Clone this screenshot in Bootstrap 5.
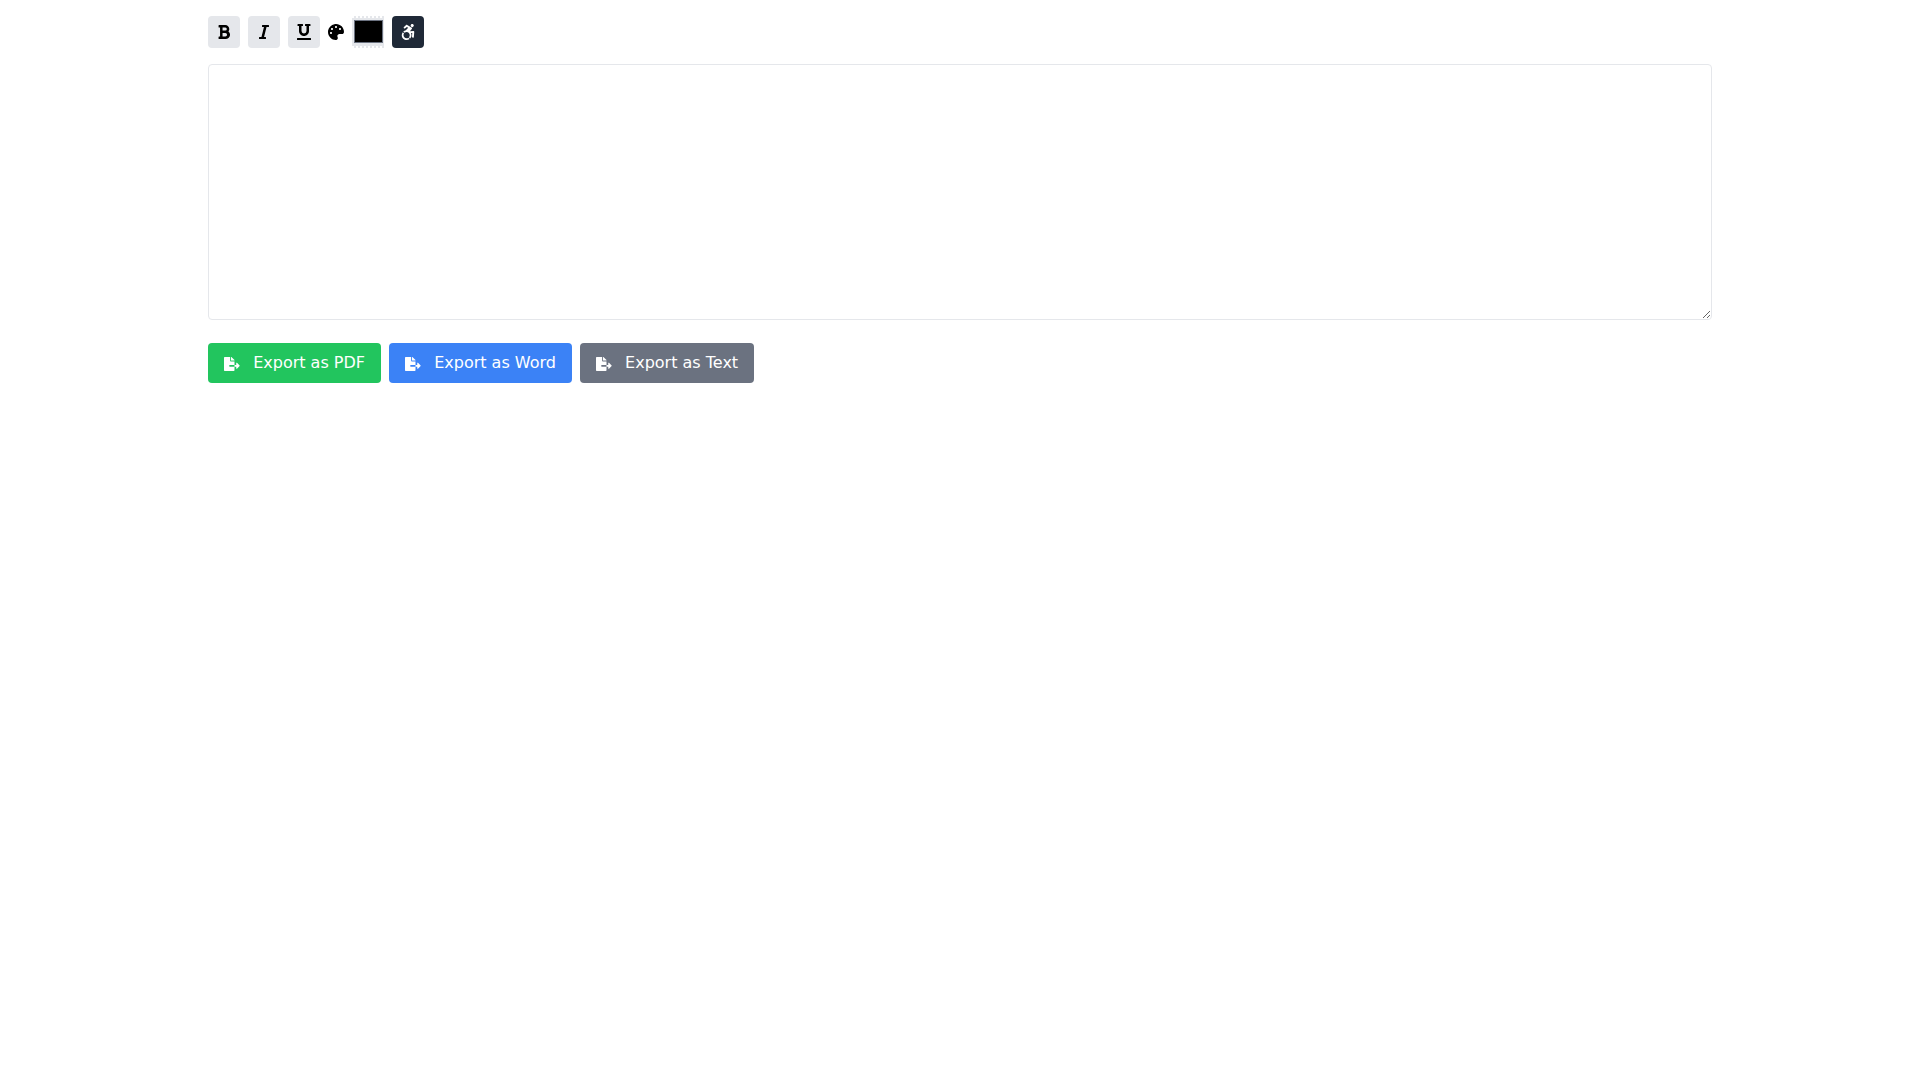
<!DOCTYPE html>
<html lang="en">
<head>
<meta charset="utf-8">
<title>Editor</title>
<link href="https://cdn.jsdelivr.net/npm/bootstrap@5.3.0/dist/css/bootstrap.min.css" rel="stylesheet">
<style>
body { font-family: "DejaVu Sans", sans-serif; font-size: 16px; color: #000; background: #fff; }
.page-wrap { max-width: 1536px; margin: 0 auto; padding: 16px; }
.tool-btn { display: flex; align-items: center; justify-content: center; width: 32px; height: 32px; padding: 0; border: 0; border-radius: 4px; background: #e5e7eb; color: #000; }
.tool-btn svg { height: 16px; width: auto; fill: currentColor; }
.tool-dark { background: #1f2937; color: #fff; }
.palette-ico { width: 16px; height: 16px; fill: #000; flex: none; }
.swatch { width: 32px; height: 32px; flex: none; padding: 0; border: 0; background-color: #e5e7eb; background-image: repeating-linear-gradient(90deg, #fff 0 2px, #e5e7eb 2px 4px), repeating-linear-gradient(90deg, #fff 0 2px, #e5e7eb 2px 4px); background-size: 100% 2px, 100% 2px; background-position: 0 0, 0 100%; background-repeat: no-repeat; }
.swatch::-webkit-color-swatch-wrapper { padding: 4px 1px 5px 2px; }
.swatch::-webkit-color-swatch { border: 1px solid #6b7280; border-radius: 0; }
.editor-box { display: block; width: 100%; height: 256px; margin-bottom: 23px; border: 1px solid #e5e7eb; border-radius: 4px; outline: 0; padding: 8px; }
.exp-btn { display: flex; align-items: center; height: 40px; padding: 8px 16px; border: 0; border-radius: 4px; color: #fff; font-size: 16px; line-height: 24px; }
.exp-btn svg { width: 15.75px; height: 14px; fill: currentColor; margin-right: 13.4px; margin-top: 2px; }
.exp-green { background: #22c55e; }
.exp-blue { background: #3b82f6; }
.exp-gray { background: #6b7280; }
</style>
</head>
<body>
<div class="page-wrap">
  <div class="d-flex align-items-center gap-2 mb-3">
    <button type="button" class="tool-btn" aria-label="Bold"><svg viewBox="0 0 384 512"><path d="M333.49 238a122 122 0 0 0 27-65.21C367.87 96.49 308 32 233.42 32H34a16 16 0 0 0-16 16v48a16 16 0 0 0 16 16h31.87v288H34a16 16 0 0 0-16 16v48a16 16 0 0 0 16 16h209.32c70.8 0 134.14-51.75 141-122.4 4.74-48.45-16.39-92.06-50.83-119.6zM145.66 112h87.76a48 48 0 0 1 0 96h-87.76zm87.76 288h-87.76V288h87.76a56 56 0 0 1 0 112z"/></svg></button>
    <button type="button" class="tool-btn" aria-label="Italic"><svg viewBox="0 0 320 512"><path d="M320 48v32a16 16 0 0 1-16 16h-62.76l-80 320H208a16 16 0 0 1 16 16v32a16 16 0 0 1-16 16H16a16 16 0 0 1-16-16v-32a16 16 0 0 1 16-16h62.76l80-320H112a16 16 0 0 1-16-16V48a16 16 0 0 1 16-16h192a16 16 0 0 1 16 16z"/></svg></button>
    <button type="button" class="tool-btn" aria-label="Underline"><svg viewBox="0 0 448 512"><path d="M32 64h32v160c0 88.22 71.78 160 160 160s160-71.78 160-160V64h32a16 16 0 0 0 16-16V16a16 16 0 0 0-16-16H272a16 16 0 0 0-16 16v32a16 16 0 0 0 16 16h32v160a80 80 0 0 1-160 0V64h32a16 16 0 0 0 16-16V16a16 16 0 0 0-16-16H32a16 16 0 0 0-16 16v32a16 16 0 0 0 16 16zm400 384H16a16 16 0 0 0-16 16v32a16 16 0 0 0 16 16h416a16 16 0 0 0 16-16v-32a16 16 0 0 0-16-16z"/></svg></button>
    <svg class="palette-ico" viewBox="0 0 512 512"><path d="M204.3 5C104.9 24.4 24.8 104.3 5.2 203.4c-37 187 131.7 326.4 258.8 306.7 41.2-6.4 61.4-54.6 42.5-91.7-23.1-45.4 9.9-98.4 60.9-98.4h79.7c35.8 0 64.8-29.6 64.9-65.3C511.5 97.1 368.1-26.9 204.3 5zM96 320c-17.7 0-32-14.3-32-32s14.3-32 32-32 32 14.3 32 32-14.3 32-32 32zm32-128c-17.7 0-32-14.3-32-32s14.3-32 32-32 32 14.3 32 32-14.3 32-32 32zm128-64c-17.7 0-32-14.3-32-32s14.3-32 32-32 32 14.3 32 32-14.3 32-32 32zm128 64c-17.7 0-32-14.3-32-32s14.3-32 32-32 32 14.3 32 32-14.3 32-32 32z"/></svg>
    <input type="color" class="swatch" value="#000000" aria-label="Text colour">
    <button type="button" class="tool-btn tool-dark" aria-label="Accessibility"><svg viewBox="0 0 448 512"><path d="M423.9 255.8L411 413.1c-3.3 40.7-63.9 35.1-60.6-4.9l10-122.5-41.1 2.3c10.1 20.7 15.8 43.9 15.8 68.5 0 41.2-16.1 78.7-42.3 106.5l-39.3-39.3c57.9-63.7 13.1-167.2-74-167.2-25.9 0-49.5 9.9-67.2 26L73 243.2c22-20.7 50.1-35.1 81.4-40.2l75.3-85.7-42.6-24.8-51.6 46c-30 26.8-70.6-18.5-40.5-45.4l68-60.7c9.8-8.8 24.1-10.2 35.5-3.6 0 0 139.3 80.9 139.5 81.1 16.2 10.1 20.7 36 6.1 52.6L285.7 229l106.1-5.9c18.5-1.1 33.6 14.4 32.1 32.7zm-64.9-154c28.1 0 50.9-22.8 50.9-50.9C409.9 22.8 387.1 0 359 0c-28.1 0-50.9 22.8-50.9 50.9 0 28.1 22.8 50.9 50.9 50.9zM179.6 456.5c-80.6 0-127.4-90.6-82.7-156.1l-39.7-39.7C36.4 287 24 320.3 24 356.4c0 130.7 150.7 201.4 251.4 122.5l-39.7-39.7c-16 10.9-35.3 17.3-56.1 17.8z"/></svg></button>
  </div>
  <textarea class="editor-box" aria-label="Editor"></textarea>
  <div class="d-flex gap-2">
    <button type="button" class="exp-btn exp-green"><svg viewBox="0 0 576 512"><use href="#ico-export"/></svg>Export as PDF</button>
    <button type="button" class="exp-btn exp-blue"><svg viewBox="0 0 576 512"><use href="#ico-export"/></svg>Export as Word</button>
    <button type="button" class="exp-btn exp-gray"><svg viewBox="0 0 576 512"><use href="#ico-export"/></svg>Export as Text</button>
  </div>
</div>
<svg width="0" height="0" class="position-absolute"><defs><path id="ico-export" d="M384 121.9c0-6.3-2.5-12.4-7-16.9L279.1 7c-4.5-4.5-10.6-7-17-7H256v128h128zM571 308l-95.7-96.4c-10.1-10.1-27.4-3-27.4 11.3V288h-64v64h64v65.2c0 14.3 17.3 21.4 27.4 11.3L571 332c6.6-6.6 6.6-17.4 0-24zm-379 28v-32c0-8.8 7.2-16 16-16h176V160H248c-13.2 0-24-10.8-24-24V0H24C10.7 0 0 10.7 0 24v464c0 13.3 10.7 24 24 24h336c13.3 0 24-10.7 24-24V352H208c-8.8 0-16-7.2-16-16z"/></defs></svg>
<script src="https://cdn.jsdelivr.net/npm/bootstrap@5.3.0/dist/js/bootstrap.bundle.min.js"></script>
</body>
</html>
